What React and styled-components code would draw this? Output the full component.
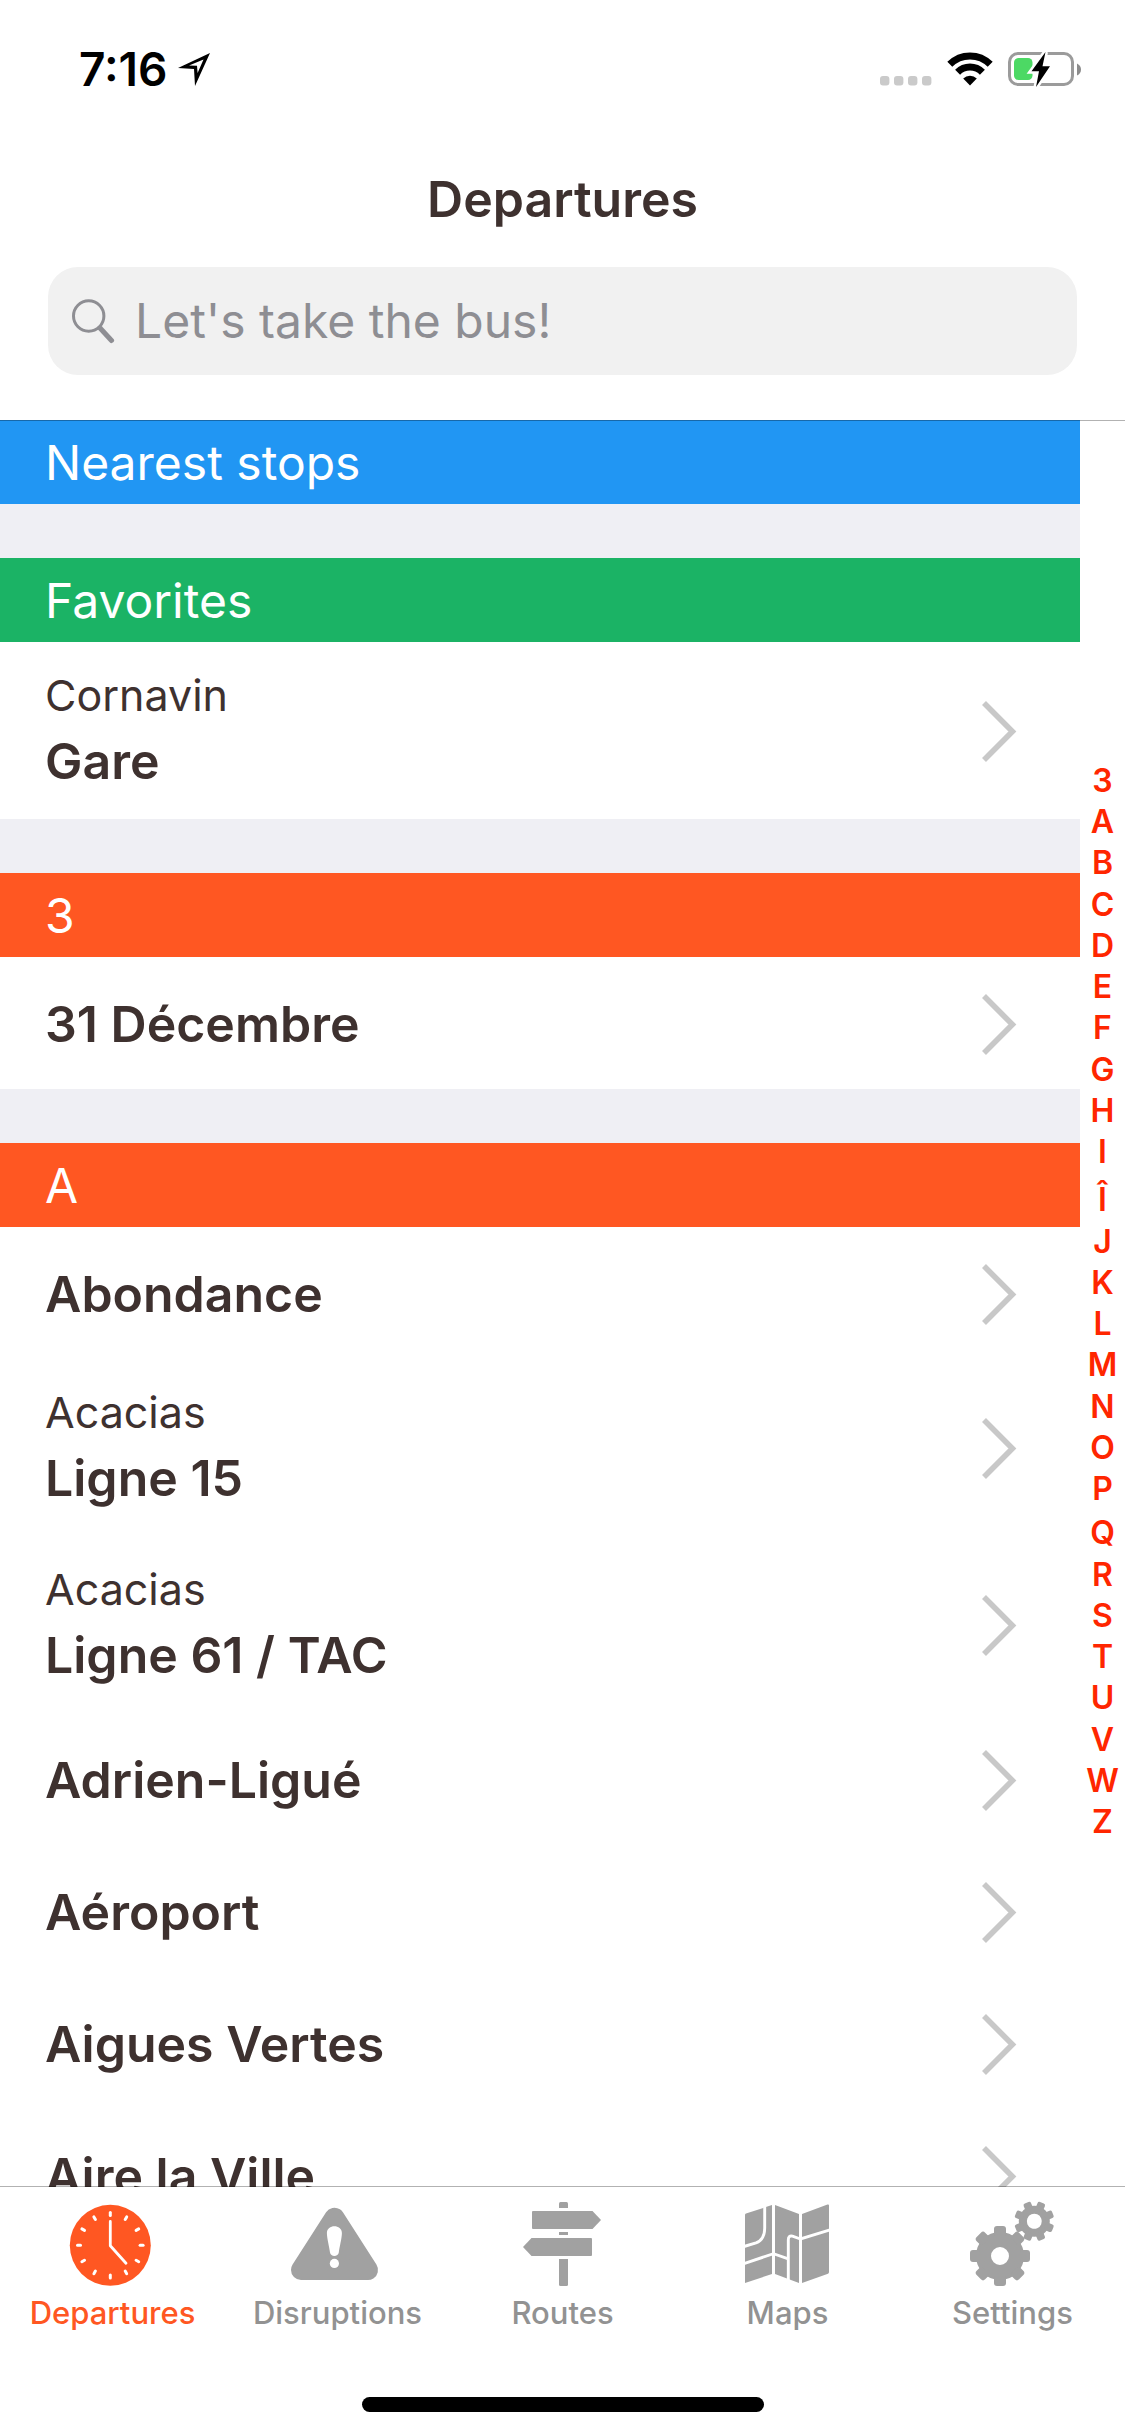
import React from "react";
import styled, { createGlobalStyle } from "styled-components";

const color = {
  orange: "#ff5722",
  blue: "#2196f3",
  green: "#1bb365",
  ink: "#3e312f",
  gap: "#efeff4",
  index: "#ff2600",
  chevron: "#c8c8c8",
  icon: "#a1a1a1",
  label: "#929292",
  hairline: "rgba(0, 0, 0, 0.3)",
};

const GlobalStyle = createGlobalStyle`
  * { box-sizing: border-box; }
  body {
    margin: 0;
    background: #fff;
    color: ${color.ink};
    font-family: Inter, "Liberation Sans", sans-serif;
  }
  h1, h2, ul { margin: 0; padding: 0; font-weight: inherit; }
  ul { list-style: none; }
  a { color: inherit; text-decoration: none; }
  svg { display: block; flex: none; }
`;

const Screen = styled.div`
  display: flex;
  flex-direction: column;
  height: 100vh;
`;

const Header = styled.header`
  position: relative;
  z-index: 1;
  flex: none;
  padding-bottom: 45px;
  box-shadow: 0 1px 0 ${color.hairline};
`;

const StatusBar = styled.div`
  display: flex;
  align-items: center;
  justify-content: space-between;
  height: 138px;
  padding: 0 43px 0 79px;
  color: #000;
`;

const StatusGroup = styled.div`
  display: flex;
  align-items: center;
  gap: ${(p) => p.$gap}px;
`;

const Clock = styled.span`
  font-size: 46px;
  font-weight: 600;
  line-height: 54px;
`;

const Title = styled.h1`
  font-size: 50px;
  font-weight: 600;
  line-height: 122px;
  text-align: center;
`;

const SearchField = styled.label`
  display: flex;
  align-items: center;
  gap: 20px;
  height: 108px;
  margin: 7px 48px 0;
  padding: 0 24px;
  border-radius: 30px;
  background: #f1f1f1;
`;

const SearchInput = styled.input`
  flex: 1;
  min-width: 0;
  padding: 0;
  border: 0;
  outline: 0;
  background: none;
  color: ${color.ink};
  font: 400 48px/60px Inter, "Liberation Sans", sans-serif;
  &::placeholder { color: #8e8e93; opacity: 1; }
`;

const Content = styled.main`
  flex: 1;
  min-height: 0;
  display: flex;
  overflow: hidden;
`;

const StopList = styled.div`
  flex: 1;
  display: flex;
  flex-direction: column;
  gap: 54px;
  background: ${color.gap};
`;

const SectionTitle = styled.h2`
  padding: 13px 45px 11px;
  background: ${(p) => color[p.$tone]};
  color: #fff;
  font-size: 48px;
  font-weight: 400;
  line-height: 60px;
`;

const StopRow = styled.a`
  display: flex;
  align-items: center;
  justify-content: space-between;
  padding: ${(p) => (p.$tall ? "23px 62px 22px 45px" : "31px 62px 29px 45px")};
  background: #fff;
`;

const Town = styled.span`
  display: block;
  font-size: 43px;
  line-height: 60px;
`;

const StopName = styled.span`
  display: block;
  font-size: 50px;
  font-weight: 600;
  line-height: 72px;
`;

const IndexColumn = styled.nav`
  flex: none;
  display: flex;
  align-items: center;
  width: 45px;
  padding-bottom: 4px;
`;

const IndexList = styled.ul`
  display: flex;
  flex-direction: column;
  justify-content: space-between;
  width: 100%;
  height: 61%;
  color: ${color.index};
  font-size: 32px;
  font-weight: 600;
  line-height: 34px;
  text-align: center;
`;

const IndexItem = styled.li`
  padding-top: ${(p) => p.$extra}px;
`;

const TabBar = styled.footer`
  position: relative;
  z-index: 1;
  flex: none;
  padding-bottom: 24px;
  background: #fff;
  box-shadow: 0 -1px 0 ${color.hairline};
`;

const Tabs = styled.nav`
  display: grid;
  grid-template-columns: repeat(5, 1fr);
`;

const Tab = styled.a`
  display: flex;
  flex-direction: column;
  align-items: center;
  gap: 6px;
  padding-top: 12px;
  color: ${(p) => (p.$active ? color.orange : color.icon)};
`;

const TabLabel = styled.span`
  color: ${(p) => (p.$active ? color.orange : color.label)};
  font-size: 31px;
  font-weight: 500;
  line-height: 36px;
`;

const HomeIndicator = styled.div`
  width: 402px;
  height: 15px;
  margin: 66px auto 0;
  border-radius: 8px;
  background: #000;
`;

const LocationArrow = () => (
  <svg width="32" height="33" viewBox="0 0 32 33">
    <path
      fillRule="evenodd"
      d="M32 0 17 33 16 16 0 15ZM25.5 6.5 11 12.5 19 12.8 19.6 20Z"
    />
  </svg>
);

const SignalDots = () => (
  <svg width="52" height="34" viewBox="0 0 52 34" fill="#cacaca">
    {[0, 14, 28, 42].map((x) => (
      <rect key={x} x={x} y="24" width="9.4" height="9.4" rx="3" />
    ))}
  </svg>
);

const WifiIcon = () => (
  <svg width="46" height="34" viewBox="0 0 46 34">
    <g fill="none" stroke="#000" strokeWidth="7">
      <path d="M2.8 12.3A28.5 28.5 0 0 1 43.2 12.3" />
      <path d="M10.6 20.2A17.5 17.5 0 0 1 35.4 20.2" />
    </g>
    <path d="M23 33.5 16.2 26.4A9.8 9.8 0 0 1 29.8 26.4Z" />
  </svg>
);

const BatteryIcon = () => (
  <svg width="74" height="36" viewBox="0 0 74 36">
    <rect x="1.5" y="2.5" width="63" height="31" rx="8.5" fill="none" stroke="#9b9b9b" strokeWidth="3" />
    <path d="M69 12.5Q73 14.5 73 18.5T69 24.5Z" fill="#8c8c8c" />
    <rect x="6" y="7" width="18.5" height="22" rx="4.5" fill="#4cd964" />
    <path
      d="M37.5 1 23.5 20.3H31L28 36 42 15.3H34.5Z"
      stroke="#fff"
      strokeWidth="5"
      paintOrder="stroke"
    />
  </svg>
);

const SearchIcon = () => (
  <svg width="43" height="46" viewBox="0 0 43 46" fill="none" stroke="#8e8e93">
    <circle cx="16.7" cy="18" r="15.2" strokeWidth="3" />
    <path d="M28 30 39.5 42.5" strokeWidth="5" strokeLinecap="round" />
  </svg>
);

const Chevron = () => (
  <svg width="36" height="62" viewBox="0 0 36 62" fill="none" stroke={color.chevron} strokeWidth="5.6">
    <path d="M2 3.1 30.4 31.5 2 59.9" />
  </svg>
);

const TabIcon = ({ children }) => (
  <svg width="95" height="90" viewBox="0 0 95 90" fill="currentColor">
    {children}
  </svg>
);

const DeparturesIcon = () => (
  <TabIcon>
    <circle cx="45.3" cy="46.3" r="40.5" />
    <g fill="none" stroke="#fff" strokeWidth="3" strokeLinecap="round" strokeLinejoin="round">
      {Array.from({ length: 12 }, (_, i) => (
        <path key={i} d="M45.3 13.5V16.5" transform={`rotate(${i * 30} 45.3 46.3)`} />
      ))}
      <path d="M45.3 22.4V46.8L61 64.3" strokeWidth="2.8" />
    </g>
  </TabIcon>
);

const DisruptionsIcon = () => (
  <TabIcon>
    <path
      d="M44.5 18.7 78 71H11Z"
      stroke="currentColor"
      strokeWidth="20"
      strokeLinejoin="round"
    />
    <path
      fill="#fff"
      d="M36.9 34C36.9 25 51.9 25 51.9 34C51.9 39 49.5 48 48.8 53.5C48.2 58 40.6 58 40 53.5C39.3 48 36.9 39 36.9 34Z"
    />
    <circle cx="44.4" cy="64.4" r="4.6" fill="#fff" />
  </TabIcon>
);

const RoutesIcon = () => (
  <TabIcon>
    <path d="M44 9V4.5Q44 3 45.5 3H51.5Q53 3 53 4.5V9Z" />
    <path d="M18 12H77.5L86 21 77.5 30H18Q17 30 17 29V13Q17 12 18 12Z" />
    <path d="M44 33H53V36H44Z" />
    <path d="M16.5 39H76Q77 39 77 40V56Q77 57 76 57H16.5L8 48Z" />
    <path d="M44 60H53V85.5Q53 87 51.5 87H45.5Q44 87 44 85.5Z" />
  </TabIcon>
);

const MapsIcon = () => (
  <TabIcon>
    <path d="M5 16Q5 15 6 14.6L32 6V75L5 84ZM35 6 59 15V84L35 75ZM62 15 87.5 5.5Q89 5 89 6.5V73Q89 74.3 88 74.7L62 84Z" />
    <g fill="none" stroke="#fff" strokeWidth="2.9">
      <path d="M24.7 6V29C24.7 37 21 42 16 43.8L4 47.5" />
      <path d="M4 64.6 33.5 54.7 48.3 59.9" />
      <path d="M48.3 82V41Q48.3 36.2 52.5 37.2L60.5 40 90 30.8" />
    </g>
  </TabIcon>
);

const Gear = ({ x, y, body, outer, tooth, hole, turn }) => (
  <g transform={`translate(${x} ${y}) rotate(${turn})`}>
    <circle r={(body + hole) / 2} fill="none" stroke="currentColor" strokeWidth={body - hole} />
    {Array.from({ length: 8 }, (_, i) => (
      <rect
        key={i}
        x={-tooth / 2}
        y={-outer}
        width={tooth}
        height={outer - body + 4}
        rx={tooth / 4}
        transform={`rotate(${i * 45})`}
      />
    ))}
  </g>
);

const SettingsIcon = () => (
  <TabIcon>
    <Gear x={35} y={57} body={24} outer={30} tooth={12} hole={9} turn={0} />
    <Gear x={69.3} y={22.3} body={15.5} outer={20} tooth={8} hole={7.5} turn={22.5} />
  </TabIcon>
);

const sections = [
  { title: "Nearest stops", tone: "blue", stops: [] },
  { title: "Favorites", tone: "green", stops: [["Cornavin", "Gare"]] },
  { title: "3", tone: "orange", stops: [[null, "31 Décembre"]] },
  {
    title: "A",
    tone: "orange",
    stops: [
      [null, "Abondance"],
      ["Acacias", "Ligne 15"],
      ["Acacias", "Ligne 61 / TAC"],
      [null, "Adrien-Ligué"],
      [null, "Aéroport"],
      [null, "Aigues Vertes"],
      [null, "Aire la Ville"],
    ],
  },
];

const letters = [..."3ABCDEFGHIÎJKLMNOPQRSTUVWZ"];

const extraHeight = { Î: 7, Q: 3 };

const tabs = [
  ["Departures", DeparturesIcon],
  ["Disruptions", DisruptionsIcon],
  ["Routes", RoutesIcon],
  ["Maps", MapsIcon],
  ["Settings", SettingsIcon],
];

export default function App() {
  return (
    <Screen>
      <GlobalStyle />
      <Header>
        <StatusBar>
          <StatusGroup $gap={10}>
            <Clock>7:16</Clock>
            <LocationArrow />
          </StatusGroup>
          <StatusGroup $gap={15}>
            <SignalDots />
            <WifiIcon />
            <BatteryIcon />
          </StatusGroup>
        </StatusBar>
        <Title>Departures</Title>
        <SearchField>
          <SearchIcon />
          <SearchInput type="text" aria-label="Search stops" placeholder="Let's take the bus!" />
        </SearchField>
      </Header>
      <Content>
        <StopList>
          {sections.map(({ title, tone, stops }) => (
            <section key={title}>
              <SectionTitle $tone={tone}>{title}</SectionTitle>
              {stops.map(([town, name]) => (
                <StopRow key={name} href="#stop" $tall={Boolean(town)}>
                  <span>
                    {town && <Town>{town}</Town>}
                    <StopName>{name}</StopName>
                  </span>
                  <Chevron />
                </StopRow>
              ))}
            </section>
          ))}
        </StopList>
        <IndexColumn>
          <IndexList>
            {letters.map((letter) => (
              <IndexItem key={letter} $extra={extraHeight[letter] || 0}>
                <a href="#section">{letter}</a>
              </IndexItem>
            ))}
          </IndexList>
        </IndexColumn>
      </Content>
      <TabBar>
        <Tabs>
          {tabs.map(([label, Icon], i) => (
            <Tab key={label} href="#tab" $active={i === 0}>
              <Icon />
              <TabLabel $active={i === 0}>{label}</TabLabel>
            </Tab>
          ))}
        </Tabs>
        <HomeIndicator />
      </TabBar>
    </Screen>
  );
}
